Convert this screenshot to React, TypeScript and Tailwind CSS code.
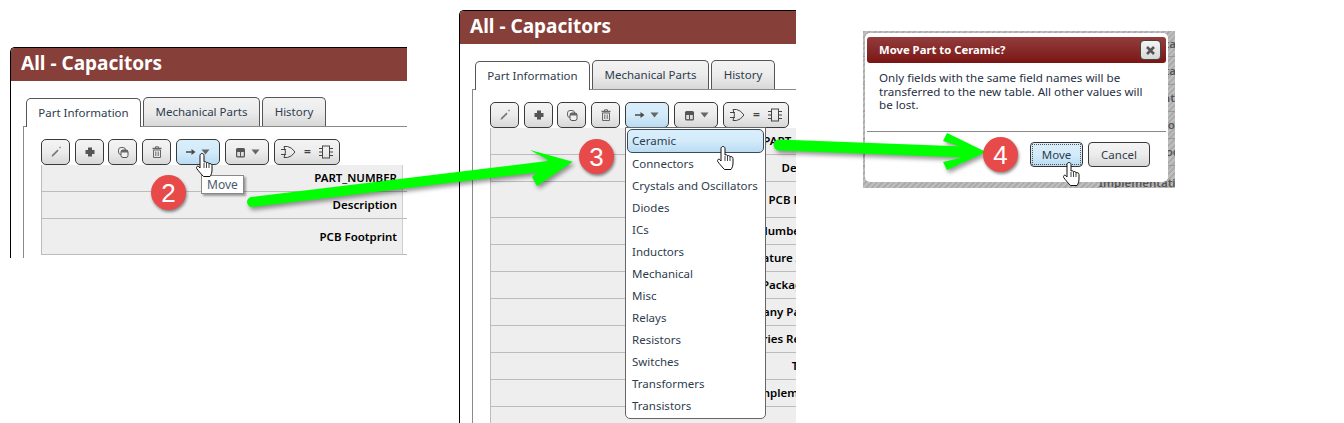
import React from "react";

const Ico = ({ w = 14, h = 14, children }: { w?: number; h?: number; children: React.ReactNode }) => (
  <svg width={w} height={h} viewBox={`0 0 ${w} ${h}`} className="shrink-0">{children}</svg>
);

const Pencil = () => (
  <Ico>
    <path d="M2.5 12 L3.2 9.8 L8.5 4.6 L9.6 5.7 L4.4 11 Z" fill="#777" />
    <path d="M11 1.5 v2 M10 2.5 h2" stroke="#888" strokeWidth="0.7" />
  </Ico>
);
const Plus = () => (
  <Ico>
    <path d="M5 2.5 h4 v2.5 h2.5 v4 H9 v2.5 H5 V9 H2.5 V5 H5 Z" fill="#555" />
  </Ico>
);
const Copy = () => (
  <Ico>
    <rect x="2.5" y="2.5" width="7" height="7" rx="2.5" fill="none" stroke="#666" strokeWidth="1" />
    <rect x="5" y="5" width="7" height="7.5" rx="2" fill="#f0f0f0" stroke="#555" strokeWidth="1" />
    <path d="M5 5 h7 v2.5 H5Z" fill="#666" />
  </Ico>
);
const Trash = () => (
  <Ico>
    <path d="M2.5 3.5 h9" stroke="#666" strokeWidth="1.3" />
    <path d="M5.5 3 V1.8 h3 V3" fill="none" stroke="#666" strokeWidth="1" />
    <path d="M3.5 5 h7 v7.5 h-7 Z" fill="none" stroke="#666" strokeWidth="1" />
    <path d="M5.8 6.5 v4.5 M8.2 6.5 v4.5" stroke="#666" strokeWidth="1" />
  </Ico>
);
const Arrow = () => (
  <Ico w={10} h={10}>
    <path d="M0 4.2 h5.5 V2 L9.5 5 L5.5 8 V5.8 H0 Z" fill="#4a4a4a" />
  </Ico>
);
const Caret = () => (
  <Ico w={9} h={6}>
    <path d="M0.5 0.5 h8 L4.5 5.5 Z" fill="#666" />
  </Ico>
);
const Save = () => (
  <Ico w={11} h={11}>
    <rect x="1" y="1" width="9" height="9.5" rx="1.5" fill="#555" />
    <rect x="2.2" y="5" width="2.8" height="4.2" fill="#ddd" />
    <rect x="6" y="5" width="2.8" height="4.2" fill="#ddd" />
  </Ico>
);
const Gate = () => (
  <Ico w={15} h={14}>
    <path d="M3 1.5 H6.5 Q10.5 2 14 7 Q10.5 12 6.5 12.5 H3 Q6 7 3 1.5 Z" fill="none" stroke="#444" strokeWidth="1" />
    <path d="M0 4.5 h5 M0 9.5 h5" stroke="#444" strokeWidth="1" />
  </Ico>
);
const Chip = () => (
  <Ico w={14} h={14}>
    <rect x="3.5" y="1" width="7" height="12" fill="none" stroke="#444" strokeWidth="1" />
    <path d="M0 3.5 h3 M0 7 h3 M0 10.5 h3 M11 3.5 h3 M11 7 h3 M11 10.5 h3" stroke="#444" strokeWidth="1" />
  </Ico>
);

const Hand = ({ className }: { className: string }) => (
  <svg width="19" height="24" viewBox="0 0 18 24" className={className}>
    <path
      d="M6.5 .5 C7.6 .5 8.5 1.4 8.5 2.5 V9 C9.5 8.5 10.8 8.7 11 9.8 C12 9.2 13.4 9.6 13.5 10.8 C14.6 10.3 16.5 10.7 16.5 12.5 V17 C16.5 20 15.5 22 14.5 23.5 H8 C6.5 22 3 18 1.2 15.5 C.5 14 1.8 12.5 3.2 13.5 L4.5 15 V2.5 C4.5 1.4 5.4 .5 6.5 .5 Z"
      fill="#fff"
      stroke="#111"
      strokeWidth="1"
    />
    <path d="M8.5 10 V15 M11 10 V15 M13.5 11 V15" stroke="#111" strokeWidth="0.8" fill="none" />
  </svg>
);

const Btn = ({ w, active, cls, children }: { w: string; active?: boolean; cls?: string; children: React.ReactNode }) => (
  <div
    className={`${w} ${cls ?? ""} h-[26px] shrink-0 flex items-center justify-center rounded-[5px] border border-[#3a3a3a] ${
      active
        ? "bg-gradient-to-b from-[#d9eefb] via-[#d3ebfa] to-[#b9dcf2]"
        : "bg-gradient-to-b from-[#f4f4f4] via-[#ececec] to-[#d8d8d8]"
    }`}
  >
    {children}
  </div>
);

const Tab = ({ w, active, children }: { w: string; active?: boolean; children: React.ReactNode }) => (
  <div
    className={`${w} h-[29px] flex items-center justify-center rounded-t-[5px] border border-[#555] text-[11.5px] text-[#2e3d4d] ${
      active
        ? "bg-white border-b-0 relative z-10 -mb-px"
        : "bg-gradient-to-b from-[#f3f3f3] via-[#ececec] to-[#d8d8d8] border-b-0"
    }`}
  >
    {children}
  </div>
);

const Row = ({ h, label }: { h: string; label: string }) => (
  <div className={`${h} flex border-b border-[#bcbcbc]`}>
    <div className="w-[360px] shrink-0 bg-[#eeeeee] flex items-center justify-end pr-[5px] text-[11.5px] font-semibold text-black whitespace-nowrap overflow-hidden">
      {label}
    </div>
    <div className="w-[60px] shrink-0 bg-white border-l border-[#cfcfcf]" />
  </div>
);

type R = [string, string];

const Win = ({ cls, rows, children }: { cls: string; rows: R[]; children?: React.ReactNode }) => (
  <div className={`absolute ${cls} overflow-hidden border-l border-t border-black rounded-tl-[5px] bg-white`}>
    <div className="h-[33px] pb-[3px] bg-[#873f3a] flex items-center pl-[10px] text-[19px] font-bold text-white leading-none">
      All - Capacitors
    </div>
    <div className="ml-[12px] pt-[16px]">
      <div className="flex gap-[2px] pl-[3px] items-end">
        <Tab w="w-[115px]" active>Part Information</Tab>
        <Tab w="w-[117px]">Mechanical Parts</Tab>
        <Tab w="w-[64px]">History</Tab>
      </div>
      <div className="border-l border-t border-[#8a8a8a] pl-[17px] pt-[12px] w-[600px] h-[500px]">
        <div className="flex gap-[5px]">
          <Btn w="w-[29px]"><Pencil /></Btn>
          <Btn w="w-[29px]"><Plus /></Btn>
          <Btn w="w-[29px]" cls="-ml-px"><Copy /></Btn>
          <Btn w="w-[29px]"><Trash /></Btn>
          <Btn w="w-[44px]" active>
            <span className="flex items-center gap-[5px]"><Arrow /><Caret /></span>
          </Btn>
          <Btn w="w-[44px]">
            <span className="flex items-center gap-[5px]"><Save /><Caret /></span>
          </Btn>
          <Btn w="w-[66px]">
            <span className="flex items-center gap-[8px] text-[12px] font-bold text-[#444]"><Gate /><span>=</span><Chip /></span>
          </Btn>
        </div>
        <div className="border-l border-[#bcbcbc] w-[423px]">
          {rows.map(([l, h]) => (
            <Row key={l} h={h} label={l} />
          ))}
        </div>
      </div>
    </div>
    {children}
  </div>
);

const items = [
  "Connectors",
  "Crystals and Oscillators",
  "Diodes",
  "ICs",
  "Inductors",
  "Mechanical",
  "Misc",
  "Relays",
  "Resistors",
  "Switches",
  "Transformers",
  "Transistors",
];

const Badge = ({ cls, n }: { cls: string; n: string }) => (
  <div
    className={`absolute ${cls} w-[35px] h-[35px] rounded-full bg-[#e84a4a] shadow-[1px_2px_3px_rgba(0,0,0,0.45)] flex items-center justify-center text-white text-[26px] leading-none font-['Liberation_Sans',sans-serif]`}
  >
    {n}
  </div>
);

const back: [string, string][] = [
  ["h-[26px]", "Package"],
  ["h-[28px]", "Voltage"],
  ["h-[27px]", "Control"],
  ["h-[27px]", "Coeff"],
  ["h-[27px]", "Model"],
];

export default function App() {
  return (
    <div className="relative w-[1344px] h-[423px] overflow-hidden bg-white font-['Noto_Sans',sans-serif]">
      <Win
        cls="left-[10px] top-[47px] w-[397px] h-[211px]"
        rows={[
          ["PART_NUMBER", "h-[27px]"],
          ["Description", "h-[27px]"],
          ["PCB Footprint", "h-[36px]"],
        ]}
      >
        <div className="absolute left-[190px] top-[127px] px-[5px] h-[19px] flex items-center bg-white border border-[#8a8a8a] shadow-[2px_2px_2px_rgba(0,0,0,0.35)] text-[12px] text-[#4a5a6a]">
          Move
        </div>
      </Win>

      <Win
        cls="left-[459px] top-[10px] w-[337px] h-[413px]"
        rows={[
          ["PART_NUMBER", "h-[27px]"],
          ["Description", "h-[27px]"],
          ["PCB Footprint", "h-[36px]"],
          ["Number Code 1", "h-[27px]"],
          ["Temperature Accuracy", "h-[27px]"],
          ["Package Codes", "h-[27px]"],
          ["Company Part Nums", "h-[27px]"],
          ["Series Resistance", "h-[27px]"],
          ["Tolerance", "h-[27px]"],
          ["Implementation", "h-[27px]"],
          ["PCB Library Path", "h-[42px]"],
        ]}
      >
        <div className="absolute left-[165px] top-[116px] w-[141px] h-[292px] bg-white border border-[#666] rounded-b-[5px] p-px text-[11.5px] text-[#2e3d4d]">
          <div className="h-[24px] rounded-[5px] border border-[#3a4a5a] bg-gradient-to-b from-[#d9eefb] via-[#d3ebfa] to-[#b9dcf2] flex items-center pl-[4px]">
            Ceramic
          </div>
          {items.map((t) => (
            <div key={t} className="h-[22px] flex items-center pl-[5px] whitespace-nowrap">
              {t}
            </div>
          ))}
        </div>
      </Win>

      <div className="absolute left-[863px] top-[31px] w-[312px] h-[157px] overflow-hidden bg-[repeating-linear-gradient(135deg,#acacac_0,#acacac_2px,#bebebe_2px,#bebebe_4px)]">
        <div className="w-[327px] text-[11.5px] font-semibold text-[#555]">
          {back.map(([h, l]) => (
            <div key={l} className={`${h} flex items-center justify-end border-b border-[#999] whitespace-nowrap`}>
              {l}
            </div>
          ))}
          <div className="h-[33px] flex items-center justify-end whitespace-nowrap">Implementation</div>
        </div>
        <div className="absolute left-[2px] top-[2px] w-[303px] h-[149px] rounded-[5px] bg-white p-[2px] pt-[4px] flex flex-col">
          <div className="h-[26px] shrink-0 rounded-[3px] bg-gradient-to-b from-[#933c3c] to-[#7a1414] flex items-center justify-between pl-[12px] pr-[5px] text-[11.3px] font-bold text-white">
            <span>Move Part to Ceramic?</span>
            <div className="w-[21px] h-[20px] rounded-[4px] border border-[#444] bg-gradient-to-b from-[#f4f4f4] to-[#d8d8d8] flex items-center justify-center">
              <svg width="11" height="11" viewBox="0 0 11 11">
                <path d="M2 2 L9 9 M9 2 L2 9" stroke="#555" strokeWidth="2.6" />
              </svg>
            </div>
          </div>
          <div className="h-[69px] shrink-0 border-b border-[#8a8a8a] pl-[12px] pt-[8px] pr-[12px] text-[11.6px] leading-[13.5px] text-[#1f3044]">
            Only fields with the same field names will be transferred to the new table. All other values will be lost.
          </div>
          <div className="flex justify-end gap-[5px] pt-[10px] pr-[16px] text-[11.5px] text-[#2e3d4d]">
            <div className="w-[53px] h-[25px] rounded-[4px] border border-[#333] p-px bg-gradient-to-b from-[#d9eefb] via-[#d3ebfa] to-[#b9dcf2] flex">
              <div className="flex-1 border border-dotted border-[#555] flex items-center justify-center">Move</div>
            </div>
            <div className="w-[62px] h-[25px] rounded-[4px] border border-[#3a3a3a] bg-gradient-to-b from-[#f4f4f4] via-[#ececec] to-[#d8d8d8] flex items-center justify-center">
              Cancel
            </div>
          </div>
        </div>
      </div>

      <svg width="1344" height="423" className="absolute left-0 top-0 drop-shadow-[2px_3px_2px_rgba(0,0,0,0.4)] pointer-events-none">
        <path d="M252 202 L548 166" stroke="#00ff00" strokeWidth="10" strokeLinecap="round" />
        <polygon points="572.7,161.7 530,150 548,160 532,177 537,186" fill="#00ff00" />
        <path d="M779 145 L964 152" stroke="#00ff00" strokeWidth="11" strokeLinecap="round" />
        <polygon points="986,152 947,133 943,141 962,147 960,158 943,162 947,170" fill="#00ff00" />
      </svg>

      <Badge cls="left-[151px] top-[175px]" n="2" />
      <Badge cls="left-[579px] top-[139px]" n="3" />
      <Badge cls="left-[983px] top-[137px]" n="4" />

      <Hand className="absolute left-[195px] top-[153px]" />
      <Hand className="absolute left-[716px] top-[146px]" />
      <Hand className="absolute left-[1062px] top-[162px]" />
    </div>
  );
}
